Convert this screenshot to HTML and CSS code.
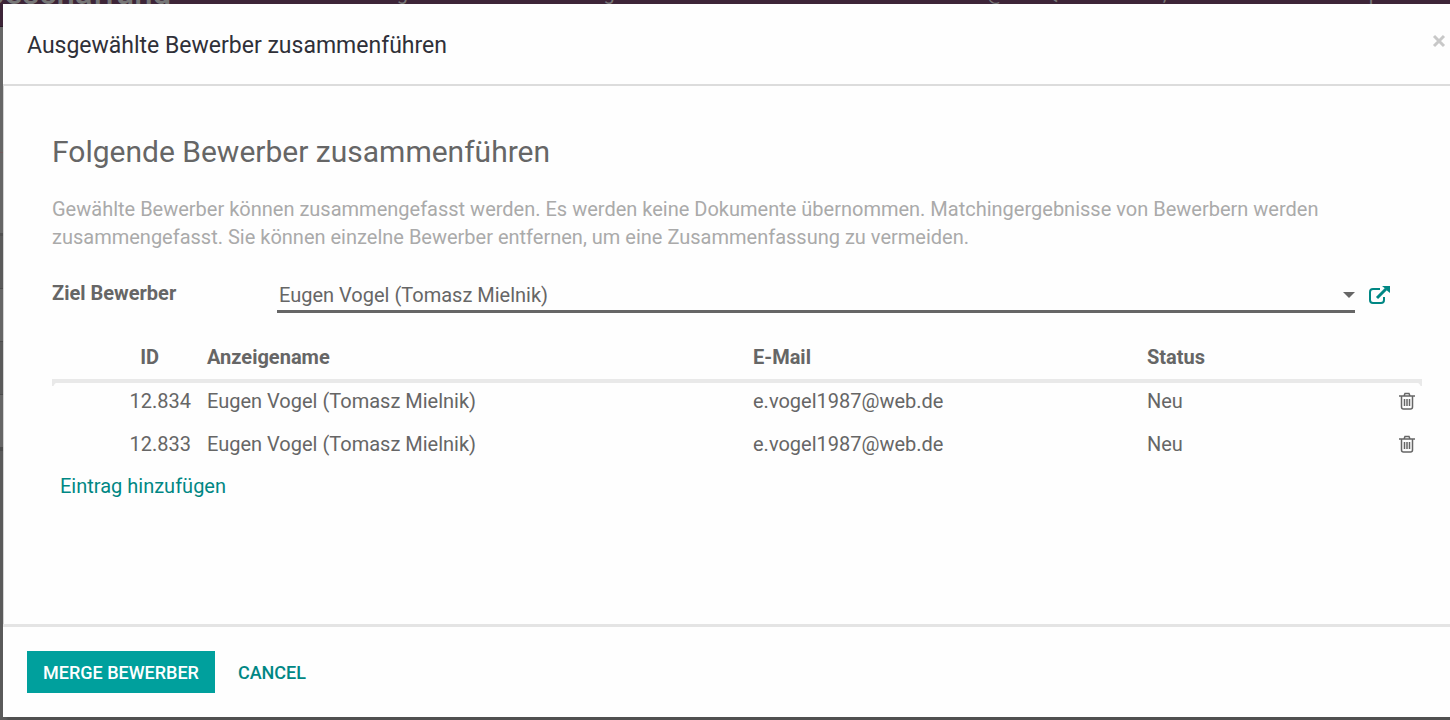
FILE: index.html
```html
<!DOCTYPE html>
<html lang="de">
<head>
  <meta charset="utf-8">
  <title>Ausgewählte Bewerber zusammenführen</title>
  <link rel="stylesheet" href="styles.css">
</head>
<body>

  <div class="backdrop">
    <div class="navbar">
      <span class="brand">beschaffung</span>
      <ul>
        <li>Bewerbungen</li>
        <li>Konfiguration</li>
      </ul>
      <ul class="systray">
        <li>@</li>
        <li>Q</li>
        <li>,</li>
        <li>p</li>
      </ul>
    </div>
    <div class="control-panel"></div>
    <div class="list-head"></div>
    <div class="list-row odd"></div>
    <div class="list-row"></div>
    <div class="list-row odd"></div>
    <div class="list-row"></div>
    <div class="list-foot"></div>
  </div>

  <div class="modal" role="dialog" aria-labelledby="modal-title">
    <div class="modal-header">
      <h4 id="modal-title">Ausgewählte Bewerber zusammenführen</h4>
      <button type="button" class="close" aria-label="Schließen">
        <svg width="14" height="14" viewBox="0 0 14 14"><path d="M2 2l10 10M12 2L2 12"/></svg>
      </button>
    </div>

    <div class="modal-body">
      <h2>Folgende Bewerber zusammenführen</h2>
      <p class="help">Gewählte Bewerber können zusammengefasst werden. Es werden keine Dokumente übernommen. Matchingergebnisse von Bewerbern werden zusammengefasst. Sie können einzelne Bewerber entfernen, um eine Zusammenfassung zu vermeiden.</p>

      <div class="field">
        <label for="target">Ziel Bewerber</label>
        <div class="select-wrap">
          <select id="target">
            <option>Eugen Vogel (Tomasz Mielnik)</option>
          </select>
        </div>
        <button type="button" class="external" aria-label="Externer Link">
          <svg width="22" height="22" viewBox="0 0 22 22">
            <path class="box" d="M12 4H5Q2 4 2 7V15Q2 18 5 18H13Q16 18 16 15V12"/>
            <path class="arrow" d="M9 13L18 4"/>
            <path class="head" d="M14 1h8v7l-2.500-2-3-3z"/>
          </svg>
        </button>
      </div>

      <table>
        <colgroup>
          <col class="col-id">
          <col class="col-name">
          <col class="col-mail">
          <col>
          <col class="col-action">
        </colgroup>
        <thead>
          <tr>
            <th class="number">ID</th>
            <th>Anzeigename</th>
            <th>E-Mail</th>
            <th>Status</th>
            <th></th>
          </tr>
        </thead>
        <tbody>
          <tr>
            <td class="number">12.834</td>
            <td>Eugen Vogel (Tomasz Mielnik)</td>
            <td>e.vogel1987@web.de</td>
            <td>Neu</td>
            <td class="action">
              <button type="button" aria-label="Löschen">
                <svg width="16" height="18" viewBox="0 0 16 18"><path d="M0 4h16M5 4L6 1.500h4L11 4M2.500 4v11q0 2 2 2h7q2 0 2-2V4M5.500 7v7M8 7v7M10.500 7v7"/></svg>
              </button>
            </td>
          </tr>
          <tr>
            <td class="number">12.833</td>
            <td>Eugen Vogel (Tomasz Mielnik)</td>
            <td>e.vogel1987@web.de</td>
            <td>Neu</td>
            <td class="action">
              <button type="button" aria-label="Löschen">
                <svg width="16" height="18" viewBox="0 0 16 18"><path d="M0 4h16M5 4L6 1.500h4L11 4M2.500 4v11q0 2 2 2h7q2 0 2-2V4M5.500 7v7M8 7v7M10.500 7v7"/></svg>
              </button>
            </td>
          </tr>
        </tbody>
      </table>
      <a href="#" class="add">Eintrag hinzufügen</a>
    </div>

    <div class="modal-footer">
      <button type="button" class="btn btn-primary">Merge Bewerber</button>
      <button type="button" class="btn btn-link">Cancel</button>
    </div>
  </div>

</body>
</html>
```

FILE: styles.css
```css
* {
  box-sizing: border-box;
}

body {
  margin: 0;
  min-height: 100vh;
  padding: 4px 0 3px 3px;
  display: flex;
  font-family: Roboto, "Liberation Sans", sans-serif;
  font-size: 20px;
  line-height: 28px;
  color: #666666;
  background-color: #666666;
}

h2, h4, p {
  margin: 0;
  font-weight: 400;
}

button {
  padding: 0;
  border: none;
  background: none;
  font-family: inherit;
  cursor: pointer;
}

svg {
  display: block;
  fill: none;
}

/* page behind the dialog */
.backdrop {
  position: absolute;
  top: 0;
  left: 0;
  right: 0;
  bottom: 0;
  display: flex;
  flex-direction: column;
  overflow: hidden;
}

.navbar {
  display: flex;
  height: 56px;
  margin-top: -29px;
  flex-shrink: 0;
  padding: 8px 70px 0 0;
  background-color: #3d2538;
  border-bottom: 1px solid #2b1a28;
  color: #777777;
}

.navbar .brand {
  width: 322px;
  margin-left: -14px;
  font-size: 33px;
  font-weight: 500;
}

.navbar ul {
  display: flex;
  gap: 100px;
  margin: 0;
  padding: 0;
  list-style: none;
}

.navbar ul li:first-child {
  margin-right: 28px;
}

.navbar .systray {
  margin-left: auto;
  gap: 104px;
}

.navbar .systray li:first-child {
  margin-right: -64px;
}

.navbar .systray li:last-child {
  margin-left: 98px;
}

.control-panel {
  height: 126px;
  flex-shrink: 0;
  border-bottom: 1px solid #735a5c;
}

.list-head {
  height: 83px;
  flex-shrink: 0;
  border-bottom: 3px solid #505050;
}

.list-row {
  height: 53px;
  flex-shrink: 0;
  border-bottom: 1px solid #4c4c4c;
}

.list-row.odd,
.list-foot {
  background-color: #5a5a5a;
}

.list-foot {
  flex: 1;
  border-top: 3px solid #4c4c4c;
}

/* dialog */
.modal {
  position: relative;
  flex: 1;
  display: flex;
  flex-direction: column;
  background-color: #fefefe;
  box-shadow: 4px 4px 2px #505050;
}

.modal-header {
  display: flex;
  justify-content: space-between;
  align-items: flex-start;
  padding: 28px 4px 24px 24px;
  border-bottom: 2px solid #dcdcdc;
}

.modal-header h4 {
  font-size: 23px;
  color: #2f3038;
}

.close {
  margin-top: 2px;
}

.close svg {
  stroke: #c8c8c8;
  stroke-width: 3;
}

.modal-body {
  flex: 1;
  padding: 46px 28px 24px 48px;
  border-left: 1px solid #d4d4d4;
}

.modal-body h2 {
  font-size: 30px;
  line-height: 40px;
  margin-bottom: 23px;
}

.help {
  max-width: 1300px;
  color: #aaaaaa;
}

.field {
  display: flex;
  align-items: flex-start;
  margin-top: 28px;
}

.field label {
  width: 225px;
  font-weight: 700;
}

.select-wrap {
  position: relative;
  flex: 1;
}

.select-wrap::after {
  content: "";
  position: absolute;
  right: 0;
  top: 13px;
  border: 6px solid transparent;
  border-top-color: #666666;
  border-bottom: none;
  pointer-events: none;
}

.select-wrap select {
  display: block;
  width: 100%;
  height: 34px;
  padding: 0 0 0 2px;
  border: none;
  border-bottom: 3px solid #666666;
  border-radius: 0;
  appearance: none;
  background: none;
  font: inherit;
  color: inherit;
}

.external {
  margin: 6px 32px 0 13px;
}

.external svg {
  stroke: #008784;
  stroke-width: 2;
}

.external .arrow {
  stroke-width: 3;
}

.external .head {
  fill: #008784;
  stroke: none;
}

table {
  width: 100%;
  margin-top: 24px;
  border-collapse: separate;
  border-spacing: 0;
  table-layout: fixed;
}

.col-id {
  width: 147px;
}

.col-name {
  width: 546px;
}

.col-mail {
  width: 394px;
}

.col-action {
  width: 31px;
}

th {
  height: 46px;
  padding: 0 8px 2px;
  border-bottom: 4px solid #e9e9e9;
  font-weight: 700;
  text-align: left;
}

td {
  height: 43px;
  padding: 0 8px 8px;
}

.number {
  text-align: right;
}

th.number {
  padding-right: 40px;
}

/* rounded ends under the header rule */
tbody tr:first-child td:first-child {
  background: radial-gradient(circle at 6px 4px, transparent 4px, #e9e9e9 5px) 0 0 / 6px 3px no-repeat;
}

tbody tr:first-child td:last-child {
  background: radial-gradient(circle at 0 4px, transparent 4px, #e9e9e9 5px) 100% 0 / 6px 3px no-repeat;
}

.action button {
  display: block;
}

.action svg {
  stroke: #666666;
  stroke-width: 1.5;
}

.add {
  display: inline-block;
  margin: 3px 0 0 8px;
  color: #008784;
  text-decoration: none;
}

.modal-footer {
  display: flex;
  gap: 7px;
  padding: 24px;
  border-top: 3px solid #e4e4e4;
}

.btn {
  height: 42px;
  padding: 0 16px;
  font-size: 18px;
  font-weight: 500;
  text-transform: uppercase;
}

.btn-primary {
  color: #ffffff;
  background-color: #00a09d;
}

.btn-link {
  color: #008784;
}
```
